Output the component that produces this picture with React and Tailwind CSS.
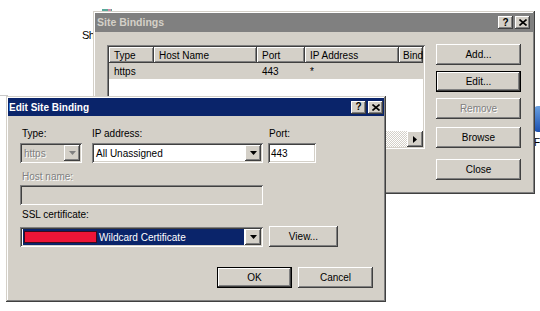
import React from "react";

const WIN =
  "shadow-[inset_-1px_-1px_#404040,inset_1px_1px_#d4d0c8,inset_-2px_-2px_#808080,inset_2px_2px_#ffffff]";
const RAISED =
  "shadow-[inset_-1px_-1px_#404040,inset_1px_1px_#ffffff,inset_-2px_-2px_#808080,inset_2px_2px_#d4d0c8]";
const SUNKEN =
  "shadow-[inset_1px_1px_#808080,inset_-1px_-1px_#ffffff,inset_2px_2px_#404040,inset_-2px_-2px_#d4d0c8]";
const HEADER =
  "shadow-[inset_-1px_-1px_#404040,inset_1px_1px_#ffffff,inset_-2px_-2px_#808080]";

function Btn({ children, w = "w-[85px]", def = false, disabled = false, cls = "" }) {
  return (
    <div
      className={`${w} h-[21px] shrink-0 bg-[#d4d0c8] ${def ? "border border-black" : ""} ${cls}`}
    >
      <div
        className={`w-full h-full ${RAISED} flex items-center justify-center text-[10px] leading-none ${
          disabled ? "text-[#808080] [text-shadow:1px_1px_#ffffff]" : "text-black"
        }`}
      >
        {children}
      </div>
    </div>
  );
}

function TitleBtns() {
  return (
    <div className="flex items-center gap-[2px]">
      <div className={`w-[15px] h-[13px] bg-[#d4d0c8] ${RAISED} flex items-center justify-center text-[10px] font-bold leading-none text-black`}>
        ?
      </div>
      <div className={`w-[15px] h-[13px] bg-[#d4d0c8] ${RAISED} flex items-center justify-center`}>
        <svg width="8" height="7" viewBox="0 0 8 7">
          <path d="M0.5 0.5 L7.5 6.5 M7.5 0.5 L0.5 6.5" stroke="#000" strokeWidth="1.6" />
        </svg>
      </div>
    </div>
  );
}

function DownArrow({ color = "#000" }) {
  return (
    <svg width="7" height="4" viewBox="0 0 7 4">
      <polygon points="0,0 7,0 3.5,4" fill={color} />
    </svg>
  );
}

function ComboBtn({ disabled = false }) {
  return (
    <div className={`w-[16px] h-full bg-[#d4d0c8] ${RAISED} flex items-center justify-center shrink-0`}>
      <DownArrow color={disabled ? "#808080" : "#000"} />
    </div>
  );
}

function Combo({ w, children, disabled = false, h = "h-[20px]" }) {
  return (
    <div className={`${w} ${h} ${SUNKEN} p-[2px] ${disabled ? "bg-[#d4d0c8]" : "bg-white"} flex`}>
      <div className="flex-1 flex items-center overflow-hidden">{children}</div>
      <ComboBtn disabled={disabled} />
    </div>
  );
}

export default function App() {
  return (
    <div className="relative w-[540px] h-[311px] bg-white overflow-hidden font-['Liberation_Sans',Arial,sans-serif] text-[10px] text-black">
      {/* desktop bits */}
      <div className="absolute left-[82px] top-[29px] text-[11px] leading-[12px] tracking-[-0.5px]">Sh</div>
      <div className="absolute left-[102px] top-[9px] w-[10px] h-[2px] bg-[#5aa89a]" />
      <div className="absolute left-[108px] top-[9px] w-[3px] h-[2px] bg-[#d48aa8]" />
      <div className="absolute left-[0px] top-[95px] w-[8px] h-[1px] bg-[#c8c8c8]" />
      <div className="absolute left-[534px] top-[106px] w-[10px] h-[26px] rounded-l-[4px] bg-gradient-to-b from-[#6aa0e0] to-[#1a4fb0]" />
      <div className="absolute left-[534px] top-[137px] text-[10px] leading-[12px]">Fi</div>

      {/* Site Bindings window */}
      <div className={`absolute left-[93px] top-[11px] w-[442px] h-[183px] bg-[#d4d0c8] p-[2px] ${WIN}`}>
        <div className="h-[19px] bg-[#808080] flex items-center justify-between pl-[2px] pr-[3px]">
          <span className="font-bold text-[10.5px] text-[#d4d0c8]">Site Bindings</span>
          <TitleBtns />
        </div>
        <div className="flex items-start pl-[12px]">
          <div className={`mt-[13px] w-[318px] h-[104px] bg-white ${SUNKEN} p-[2px] flex flex-col`}>
            <div className="h-[16px] flex shrink-0 bg-[#d4d0c8]">
              <div className={`w-[45px] ${HEADER} pl-[5px] flex items-center`}>Type</div>
              <div className={`w-[103px] ${HEADER} pl-[5px] flex items-center`}>Host Name</div>
              <div className={`w-[48px] ${HEADER} pl-[5px] flex items-center`}>Port</div>
              <div className={`w-[94px] ${HEADER} pl-[5px] flex items-center`}>IP Address</div>
              <div className={`flex-1 ${HEADER} pl-[4px] flex items-center overflow-hidden whitespace-nowrap`}>Bind</div>
            </div>
            <div className="h-[16px] flex shrink-0 bg-[#d4d0c8] items-center">
              <div className="w-[45px] pl-[5px]">https</div>
              <div className="w-[103px]" />
              <div className="w-[48px] pl-[5px]">443</div>
              <div className="w-[94px] pl-[5px]">*</div>
            </div>
            <div className="flex-1" />
            <div className="h-[16px] flex shrink-0">
              <div className={`w-[16px] h-full bg-[#d4d0c8] ${RAISED} flex items-center justify-center`}>
                <svg width="4" height="7" viewBox="0 0 4 7">
                  <polygon points="4,0 4,7 0,3.5" fill="#000" />
                </svg>
              </div>
              <div className="flex-1 bg-[repeating-conic-gradient(#d4d0c8_0%_25%,#ffffff_0%_50%)] bg-[length:2px_2px]" />
              <div className={`w-[16px] h-full bg-[#d4d0c8] ${RAISED} flex items-center justify-center`}>
                <svg width="4" height="7" viewBox="0 0 4 7">
                  <polygon points="0,0 4,3.5 0,7" fill="#000" />
                </svg>
              </div>
            </div>
          </div>
          <div className="ml-[11px] mt-[12px] flex flex-col">
            <Btn>Add...</Btn>
            <Btn def cls="mt-[6px]">Edit...</Btn>
            <Btn disabled cls="mt-[6px]">Remove</Btn>
            <Btn cls="mt-[8px]">Browse</Btn>
            <Btn cls="mt-[11px]">Close</Btn>
          </div>
        </div>
      </div>

      {/* Edit Site Binding window */}
      <div className={`absolute left-[6px] top-[96px] w-[380px] h-[206px] bg-[#d4d0c8] p-[2px] ${WIN}`}>
        <div className="h-[18px] bg-[#0a246a] flex items-center justify-between pl-[1px] pr-[1px]">
          <span className="font-bold text-[10px] text-white">Edit Site Binding</span>
          <TitleBtns />
        </div>
        <div className="pl-[12px] pr-[11px] flex flex-col">
          <div className="mt-[12px] flex">
            <div className="w-[62px] flex flex-col">
              <div className="h-[12px] leading-[12px] pl-[2px]">Type:</div>
              <div className="mt-[3px]">
                <Combo w="w-[62px]" disabled>
                  <span className="pl-[2px] text-[#808080] [text-shadow:1px_1px_#ffffff]">https</span>
                </Combo>
              </div>
            </div>
            <div className="ml-[10px] w-[171px] flex flex-col">
              <div className="h-[12px] leading-[12px]">IP address:</div>
              <div className="mt-[3px]">
                <Combo w="w-[171px]">
                  <span className="pl-[2px]">All Unassigned</span>
                </Combo>
              </div>
            </div>
            <div className="ml-[5px] w-[48px] flex flex-col">
              <div className="h-[12px] leading-[12px] pl-[1px]">Port:</div>
              <div className={`mt-[3px] h-[20px] w-[48px] bg-white ${SUNKEN} px-[3px] flex items-center`}>443</div>
            </div>
          </div>
          <div className="mt-[8px] h-[12px] leading-[12px] pl-[2px] text-[#808080] [text-shadow:1px_1px_#ffffff]">
            Host name:
          </div>
          <div className={`mt-[2px] w-[243px] h-[20px] bg-[#d4d0c8] ${SUNKEN}`} />
          <div className="mt-[4px] h-[12px] leading-[12px] pl-[2px]">SSL certificate:</div>
          <div className="mt-[5px] flex items-end">
            <Combo w="w-[243px]">
              <div className="flex-1 h-full bg-[#0a246a] flex items-center ml-[1px] mr-[1px]">
                <div className="ml-[1px] w-[73px] h-[12px] bg-[#ee1537] border border-[#3b0d1c]" />
                <span className="ml-[2px] text-white whitespace-nowrap">Wildcard Certificate</span>
              </div>
            </Combo>
            <Btn w="w-[69px]" cls="ml-[6px]">View...</Btn>
          </div>
          <div className="mt-[20px] flex justify-end gap-[6px]">
            <Btn w="w-[75px]" def>OK</Btn>
            <Btn w="w-[75px]">Cancel</Btn>
          </div>
        </div>
      </div>
    </div>
  );
}
